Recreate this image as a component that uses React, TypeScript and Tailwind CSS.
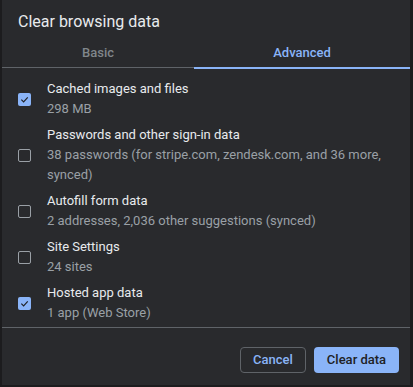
const items = [
  { title: 'Cached images and files', sub: '298 MB', checked: true },
  {
    title: 'Passwords and other sign-in data',
    sub: '38 passwords (for stripe.com, zendesk.com, and 36 more, synced)',
    checked: false,
  },
  { title: 'Autofill form data', sub: '2 addresses, 2,036 other suggestions (synced)', checked: false },
  { title: 'Site Settings', sub: '24 sites', checked: false },
  { title: 'Hosted app data', sub: '1 app (Web Store)', checked: true },
];

function Checkbox({ checked }: { checked: boolean }) {
  if (checked) {
    return (
      <div className="w-[13px] h-[13px] rounded-[2px] bg-[#8ab4f8] flex items-center justify-center shrink-0">
        <svg width="9" height="9" viewBox="0 0 10 10" fill="none">
          <path d="M1.5 5.2 L4 7.6 L8.6 2.6" stroke="#202124" strokeWidth="1.3" />
        </svg>
      </div>
    );
  }
  return <div className="w-[13px] h-[13px] rounded-[2px] border-[1.5px] border-[#9aa0a6] shrink-0" />;
}

export default function App() {
  return (
    <div
      className="w-[413px] h-[387px] bg-[#1c1c1e] flex"
      style={{ fontFamily: 'Roboto, "Liberation Sans", sans-serif' }}
    >
      <div className="ml-[2px] w-[408px] h-[385px] bg-[#292a2d] flex flex-col">
        <div className="px-[16px] pt-[12px] h-[40px] text-[16px] leading-[20px] text-[#e8eaed]">
          Clear browsing data
        </div>
        <div className="flex h-[29px] text-[13px] font-medium">
          <div className="w-[192px] flex flex-col">
            <div className="flex-1 flex items-center justify-center text-[#80868b] pb-[2px]">Basic</div>
            <div className="h-[1px] bg-[#5f6368] mb-[1px]" />
          </div>
          <div className="flex-1 flex flex-col">
            <div className="flex-1 flex items-center justify-center text-[#8ab4f8] pb-[2px]">Advanced</div>
            <div className="h-[2px] bg-[#8ab4f8]" />
          </div>
        </div>
        <div className="flex flex-col pt-[7px] pb-[1px] pl-[16px] pr-[20px]">
          {items.map((it) => (
            <div key={it.title} className="flex items-center py-[3px]">
              <Checkbox checked={it.checked} />
              <div className="ml-[16px] flex flex-col text-[13px] leading-[20px]">
                <div className="text-[#e8eaed]">{it.title}</div>
                <div className="text-[#9aa0a6]">{it.sub}</div>
              </div>
            </div>
          ))}
        </div>
        <div className="h-[1px] bg-[#5f6368]" />
        <div className="flex justify-end gap-[8px] pr-[11px] pt-[19px]">
          <button className="w-[66px] h-[26px] rounded-[4px] border border-[#5f6368] text-[13px] font-medium text-[#8ab4f8]">
            Cancel
          </button>
          <button className="w-[85px] h-[26px] rounded-[4px] bg-[#8ab4f8] text-[13px] font-medium text-[#202124]">
            Clear data
          </button>
        </div>
      </div>
    </div>
  );
}
